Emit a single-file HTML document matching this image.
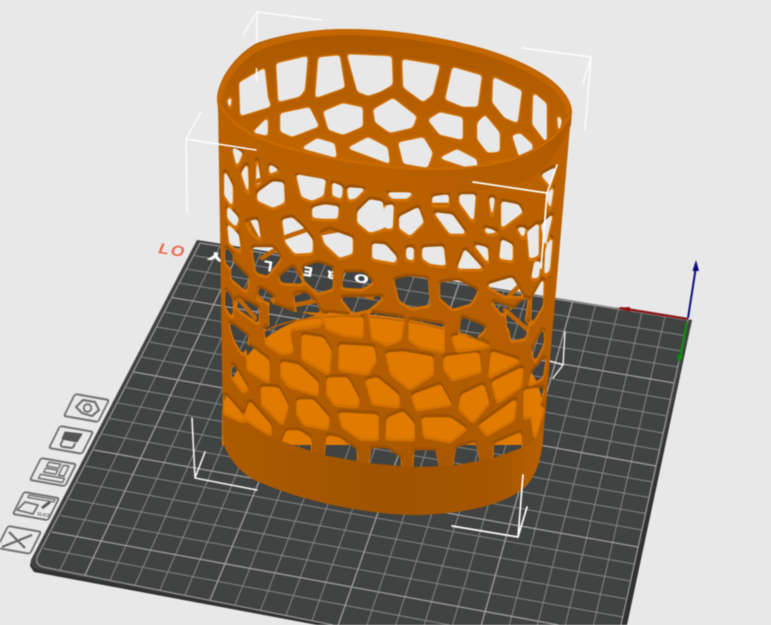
<!DOCTYPE html>
<html lang="en">
<head>
<meta charset="utf-8">
<title>Slicer preview</title>
<style>
html,body{margin:0;padding:0;background:#e8e8e8;width:771px;height:625px;overflow:hidden}
svg{display:block;filter:blur(.5px)}
text{font-family:"Liberation Sans",sans-serif}
</style>
</head>
<body>
<svg xmlns="http://www.w3.org/2000/svg" width="771" height="625" viewBox="0 0 771 625">
<defs>
<clipPath id="plateClip"><polygon points="197,240 692,320 627,625 317,625 34,572 30,566 31,560"/></clipPath>
<clipPath id="bodyClip"><path d="M218,105 L220,230 L223,440 C226,458 245,478 262,483 C300,500 360,513 410,515 C460,515 505,505 525,487 C535,478 541,460 543,440 L556,290 L571,115 Z"/></clipPath>
<linearGradient id="bodyG" x1="0" y1="0" x2="0" y2="1"><stop offset="0" stop-color="#bc6200"/><stop offset=".55" stop-color="#b75f00"/><stop offset="1" stop-color="#a55600"/></linearGradient>
<linearGradient id="baseG" x1="0" y1="0" x2="1" y2="0"><stop offset="0" stop-color="#ad5b00"/><stop offset=".5" stop-color="#a05300"/><stop offset=".85" stop-color="#a65600"/><stop offset="1" stop-color="#b66000"/></linearGradient>
<linearGradient id="wallG" gradientUnits="userSpaceOnUse" x1="0" y1="30" x2="0" y2="170"><stop offset="0" stop-color="#a95700"/><stop offset=".3" stop-color="#b15c00"/><stop offset="1" stop-color="#c26600"/></linearGradient>
<linearGradient id="bandG" x1="0" y1="0" x2="1" y2="0"><stop offset="0" stop-color="#ba6100"/><stop offset=".5" stop-color="#b96000"/><stop offset="1" stop-color="#b05b00"/></linearGradient>

<filter id="round" x="0" y="0" width="771" height="625" filterUnits="userSpaceOnUse" color-interpolation-filters="sRGB">
<feGaussianBlur stdDeviation="1.7"/>
<feComponentTransfer><feFuncA type="linear" slope="9" intercept="-4"/></feComponentTransfer>
</filter>

<g id="h" stroke-linejoin="round">
<polygon points="233,148 242,153 237,165"/>
<polygon points="242,173 247,165 248,192"/>
<polygon points="257,160 260,182 257,185"/>
<polygon points="258,193 273,182 283,183 284,202 273,207 258,200"/>
<polygon points="270,165 278,170 270,173"/>
<polygon points="297,175 325,180 323,195 312,200 302,196"/>
<polygon points="333,183 342,187 341,198 333,195"/>
<polygon points="348,188 364,189 355,198 349,199"/>
<polygon points="388,193 412,193 407,198 392,198"/>
<polygon points="433,197 448,195 448,204 433,204"/>
<polygon points="460,195 475,195 473,220 460,202"/>
<polygon points="313,208 325,205 338,207 337,218 323,218 313,217"/>
<polygon points="358,212 370,200 382,202 383,228 370,232 358,222"/>
<polygon points="386,206 393,205 392,228 386,228"/>
<polygon points="400,217 418,208 423,222 410,235 400,228"/>
<polygon points="435,213 452,215 465,233 450,233"/>
<polygon points="502,202 518,205 522,212 502,227"/>
<polygon points="485,228 497,232 487,233"/>
<polygon points="490,198 494,198 492,215"/>
<polygon points="518,228 525,228 523,237"/>
<polygon points="542,175 555,168 550,185"/>
<polygon points="542,225 552,215 545,245"/>
<polygon points="547,195 553,188 550,208"/>
<polygon points="546,250 552,238 549,270 545,274"/>
<polygon points="535,262 540,262 538,277 532,278"/>
<polygon points="528,232 538,224 538,255 530,258"/>
<polygon points="225,172 232,186 232,205 225,195"/>
<polygon points="228,207 238,218 236,226 228,218"/>
<polygon points="226,248 232,255 232,268 226,262"/>
<polygon points="226,290 232,300 232,316 226,306"/>
<polygon points="247,222 257,220 260,238 252,232"/>
<polygon points="283,220 292,218 302,227 312,240 312,252 295,253 286,242"/>
<polygon points="322,233 330,230 343,235 352,238 352,253 340,257 325,243"/>
<polygon points="373,244 385,245 396,257 395,262 373,258"/>
<polygon points="407,248 413,248 413,260 407,258"/>
<polygon points="423,248 443,247 445,265 430,263 423,258"/>
<polygon points="465,250 482,268 458,268"/>
<polygon points="475,245 487,248 488,262"/>
<polygon points="502,240 512,245 512,260 500,258"/>
<polygon points="228,225 238,235 240,250 230,243"/>
<polygon points="232,262 248,278 246,290 232,278"/>
<polygon points="253,248 273,248 280,258 267,275 257,272"/>
<polygon points="280,277 293,267 302,283 282,282"/>
<polygon points="303,268 318,263 332,268 332,288 318,292 305,280"/>
<polygon points="345,273 363,273 372,282 362,288 343,287"/>
<polygon points="342,298 357,298 382,297 368,309 353,312"/>
<polygon points="260,288 273,297 272,302 258,298"/>
<polygon points="295,295 305,293 315,302 320,312 297,310"/>
<polygon points="238,298 258,308 258,322 238,308"/>
<polygon points="270,304 295,313 320,317 320,324 285,328 270,325"/>
<polygon points="395,280 408,277 427,279 429,304 412,307 400,300"/>
<polygon points="441,283 458,281 477,291 470,303 453,308 441,298"/>
<polygon points="488,285 512,278 522,295 505,295"/>
<polygon points="507,315 527,298 523,328 508,328"/>
<polygon points="533,298 543,280 542,305 532,322"/>
<polygon points="493,302 510,308 502,313"/>
<polygon points="462,318 480,325 485,328 478,335 460,332"/>
<polygon points="265,328 288,325 292,350 282,352 267,343"/>
<polygon points="325,313 362,317 362,335 343,333 327,327"/>
<polygon points="370,313 403,318 400,338 387,343 373,337"/>
<polygon points="410,320 443,325 443,350 420,345 410,338"/>
<polygon points="453,336 477,338 488,345 457,349"/>
<polygon points="230,323 248,337 243,353 235,340"/>
<polygon points="248,345 268,360 268,380 248,368"/>
<polygon points="303,335 323,338 330,350 328,372 303,357"/>
<polygon points="340,345 373,347 375,360 367,372 340,368"/>
<polygon points="387,353 403,352 432,357 432,373 410,387 392,373"/>
<polygon points="445,357 478,353 480,370 453,378 445,368"/>
<polygon points="492,352 518,360 490,375"/>
<polygon points="282,362 298,365 317,382 317,393 290,385 282,375"/>
<polygon points="328,378 347,378 358,398 357,405 335,403 328,393"/>
<polygon points="367,380 377,378 398,395 398,405 373,402"/>
<polygon points="413,395 440,385 450,403 417,408"/>
<polygon points="462,395 483,385 488,402 473,420 460,408"/>
<polygon points="493,382 522,368 520,385 498,400"/>
<polygon points="262,387 278,388 287,405 282,422 263,403"/>
<polygon points="233,365 247,388 243,390 232,375"/>
<polygon points="298,400 313,400 328,417 327,427 305,423 298,413"/>
<polygon points="340,413 377,415 377,438 360,437 343,425"/>
<polygon points="388,418 403,412 413,423 413,438 387,437"/>
<polygon points="423,418 450,418 465,428 450,440 425,435"/>
<polygon points="480,425 515,400 513,418 487,433"/>
<polygon points="250,402 270,425 270,433 245,417"/>
<polygon points="525,390 543,388 538,407 525,417"/>
<polygon points="287,431 299,431 310,438 310,452 283,442"/>
<polygon points="328,436 339,438 356,450 356,465 325,458"/>
<polygon points="372,449 387,449 400,458 400,472 369,470"/>
<polygon points="415,451 435,451 439,472 414,472"/>
<polygon points="457,448 475,443 480,467 453,472"/>
<polygon points="495,444 520,433 521,450 494,464"/>
<polygon points="532,413 543,407 535,435"/>
<polygon points="225,395 240,412 243,420 225,412"/>
<polygon points="510,330 528,323 525,337 512,340"/>
<polygon points="533,350 543,330 543,343 535,360"/>
<polygon points="532,373 545,358 542,377 530,383"/>
</g>

<g id="u" stroke-linejoin="round">
<polygon points="240,83 264,69 267,97 270,106 241,115"/>
<polygon points="277,64 307,57 304,90 299,96 279,101"/>
<polygon points="319,58 339,56 344,87 316,97"/>
<polygon points="348,55 391,57 392,84 380,91 368,95 358,91"/>
<polygon points="403,60 439,66 432,94 423,101 404,87"/>
<polygon points="453,68 481,76 477,106 463,106 446,99"/>
<polygon points="494,78 521,91 517,122 505,117 493,102"/>
<polygon points="534,94 546,104 546,141 533,124"/>
<polygon points="558,116 561,120 559,132"/>
<polygon points="228,100 231,98 230,108"/>
<polygon points="254,132 267,119 267,135"/>
<polygon points="281,114 309,108 318,126 292,136 281,131"/>
<polygon points="324,112 343,104 362,108 362,126 343,134 329,129"/>
<polygon points="374,110 393,99 416,117 412,127 390,132 376,122"/>
<polygon points="429,120 440,113 462,118 462,139 440,134"/>
<polygon points="478,123 485,116 499,133 499,151 488,152 478,139"/>
<polygon points="513,136 520,134 532,145 531,151 520,157"/>
<polygon points="303,148 317,139 334,144 336,157"/>
<polygon points="349,148 368,138 387,148 389,163"/>
<polygon points="399,143 423,138 432,153 427,167 404,163"/>
<polygon points="441,158 457,150 476,160 477,170"/>
<polygon points="493,163 505,162 497,168"/>
</g>

<mask id="m" maskUnits="userSpaceOnUse" x="0" y="0" width="771" height="625">
<rect x="0" y="0" width="771" height="625" fill="#fff"/>
<g filter="url(#round)"><use href="#h" fill="#000" stroke="#000" stroke-width="1.6"/></g>
</mask>
</defs>

<rect x="0" y="0" width="771" height="625" fill="#e8e8e8"/>

<!-- plate -->
<polygon points="197,240 692,320 627,625 317,625 34,572 30,566 31,560" fill="#303131"/>
<polygon points="197,240 692,320 621,625 332,625 34,568 31,564 31,560" fill="#414242"/>
<g clip-path="url(#plateClip)" fill="none">
<path stroke="#858686" stroke-width="1" d="M220,246.2L60,570M261,252.6L110,580M282,255.9L135,585M304,259.4L160,590M326,262.9L185,595M370,269.8L235,605M392,273.3L260.5,610.1M414,276.8L286,615.2M436.5,280.3L312,620.4M481.5,287.4L367,625M504,291L395.7,625M527,294.6L424.2,625M549.5,298.2L452.6,625M595.5,305.4L509.4,625M618.5,309L537.4,625M642,312.7L565.3,625M665,316.4L593.5,625
M193.6,255.5L684.6,335.5M186.7,269L681.2,351M179.5,283L677.7,367M164.6,312L670.5,399.5M157,327L666.9,416M149.3,342L663.1,433M141.6,357L659.4,450M126,387.5L652.4,482M118,403L649,497.5M110,418.5L645.4,513.5M102.1,434L641.8,530M85.7,466L634.3,564M77.3,482.5L630.6,581M68.8,499L626.6,599M60.4,515.5L622.7,617M43.5,548.5L449.5,625"/>
<path stroke="#a0a0a0" stroke-width="1.3" d="M240,249.3L85,575M348,266.4L210,600M459,283.9L338.2,625M572.5,301.8L481.3,625M172.1,297.5L674.1,383M133.9,372L655.9,466M93.9,450L638.1,547M51.9,532L558.6,625"/>
<path stroke="#9a9a9a" stroke-width="1.2" d="M333,625L43,567Q35,565 37,557L200,243L688,320L621,625"/>
</g>

<!-- bed markings -->
<text transform="translate(158,253) rotate(9) scale(1.15,1)" font-size="15" font-weight="700" font-style="italic" letter-spacing="1.5" fill="#ec6a50">LO</text>
<g fill="#fff" font-weight="700" stroke="#fff" stroke-width=".6">
<text transform="translate(224,254) rotate(190) scale(1.4,.7)" font-size="17">Y</text>
<text transform="translate(273,262) rotate(190)" font-size="14">L</text>
<text transform="translate(313,268) rotate(190)" font-size="13">E</text>
<text transform="translate(336,272) rotate(190)" font-size="14">a</text>
<text transform="translate(369,276) rotate(190) scale(1.3,.8)" font-size="14">O</text>
</g>

<!-- back bounding box lines -->
<g stroke="#fff" stroke-width="1.4" fill="none" stroke-linecap="round" opacity=".95">
<path d="M322,20L257,12L243,35M257,12L256.5,82"/>
<path d="M201,112L186,139L187,213M186,139L256,150"/>
<path d="M523,48L591,57L583,83M591,57L585,130"/>
<path d="M257,288L258,303"/>
<path d="M565,332L563,365L547,360M563,365L553,378"/>
<path d="M192,418L195,478L257,490M195,478L205,452" stroke-width="1.6"/>
</g>

<!-- axes -->
<path d="M688,319L620,308" stroke="#8a1414" stroke-width="2.4" fill="none"/>
<polygon points="616,308 630,307 630,312" fill="#8a1414"/>
<path d="M688,318L695.5,270" stroke="#0b0b7e" stroke-width="2" fill="none"/>
<polygon points="696,260 692.5,271 699,271" fill="#0b0b7e"/>
<path d="M687,322L680,358" stroke="#109010" stroke-width="2.2" fill="none"/>
<polygon points="679,363 676.5,355 683,356" fill="#109010"/>

<!-- back wall struts seen through the mesh -->
<g fill="none" stroke="#bf6400" stroke-linecap="round" stroke-linejoin="round" stroke-width="4.5">
<path d="M283,238L312,228"/>
<path d="M322,233L344,229"/>
<path d="M255,182L283,172"/>
<path d="M432,205L450,205"/>
<path d="M272,300L300,292"/>
<path d="M470,250L487,270"/>
<path d="M477,312L493,333"/>
<path d="M505,310L528,330"/>
<path d="M245,215L258,240"/>
<path d="M262,258L275,250"/>
<path d="M505,300L520,285"/>
<path d="M357,292L372,298"/>
<path d="M240,300L255,318"/>
<path d="M295,305L320,300"/>
<path d="M265,305L252,290"/>
</g>

<!-- floor -->
<path d="M222,410C232,362 265,322 330,313C400,312 480,330 525,365C540,380 546,400 542,445L222,445Z" fill="#e07a00"/>
<path d="M250,340C275,322 300,318 340,316C400,316 470,330 515,358" fill="none" stroke="#b86000" stroke-width="1.5"/>

<!-- front mesh wall -->
<g mask="url(#m)">
<g clip-path="url(#bodyClip)">
<rect x="210" y="100" width="370" height="420" fill="url(#bodyG)"/>
<g filter="url(#round)"><use href="#h" transform="translate(0,-1.5)" fill="#9b5000" stroke="#9b5000" stroke-width="4.5"/></g>
<g filter="url(#round)"><use href="#h" transform="translate(0,1.6)" fill="#d27100" stroke="#d27100" stroke-width="4"/></g>
</g>
</g>

<!-- solid base -->
<path d="M223,420L243,425L278,440L323,455L367,463L410,467L450,466L490,459L530,445L543,428L543,440C541,460 535,478 525,487C505,505 460,515 410,515C360,513 300,500 262,483C245,478 226,458 223,440Z" fill="url(#baseG)"/>

<!-- back wall upper with rim interior -->
<path d="M217,100C217,80 235,55 257,43C285,33 320,29 345,29C390,29 430,35 470,45C510,55 545,72 560,88C568,97 572,105 572,112C562,130 545,145 520,155C500,163 470,168 433,168C420,168 400,168 367,163C330,158 280,148 250,133C235,125 222,112 217,100Z" fill="url(#wallG)"/>
<g filter="url(#round)"><use href="#u" fill="#cc6c00" stroke="#cc6c00" stroke-width="4.5"/></g>
<g filter="url(#round)"><use href="#u" fill="#e8e8e8" stroke="#e8e8e8" stroke-width="1.6"/></g>
<path d="M256.5,68L256.5,82" stroke="#fff" stroke-width="1.4"/>
<path d="M220,100C220,82 238,58 259,47C287,36 320,32 345,32C390,32 430,38 470,48C510,58 543,74 558,90C566,99 569,106 569,114" fill="none" stroke="#c46700" stroke-width="6"/>

<!-- rim front band -->
<path d="M217,100C222,112 235,125 250,133C280,148 330,158 367,163C400,168 420,168 433,168C470,168 500,163 520,155C545,145 562,130 572,110L571,125C560,150 545,170 527,180C500,190 470,193 433,193C400,193 380,190 367,187C330,180 300,175 280,167C250,155 225,135 219,118Z" fill="url(#bandG)"/>
<path d="M218,101C223,113 236,126 251,134C281,149 331,159 368,164C401,169 421,169 433,169C470,169 501,164 521,156C546,146 563,131 571,113" fill="none" stroke="#cb6c00" stroke-width="2"/>

<!-- front bounding box lines -->
<g stroke="#fff" stroke-width="1.7" fill="none" stroke-linecap="round">
<path d="M186,139L256,150" stroke-width="1.5"/>
<path d="M473,182L547,193L557,165M547,193L541,268"/>
<path d="M452,526L518,537L523,475M518,537L527,507"/>
</g>

<!-- left toolbar icons -->
<g fill="none" stroke="#727272" stroke-width="1.9" stroke-linejoin="round">
<rect transform="matrix(1 .176 -.5 1 75 394)" x="0" y="0" width="34" height="22" rx="2"/>
<polygon points="76,407 83,400 95,402 99,410 92,416 82,413" stroke-width="2.2"/>
<circle cx="87.5" cy="408" r="3.8" stroke-width="1.9"/>

<rect transform="matrix(1 .176 -.5 1 60 426)" x="0" y="0" width="33" height="22" rx="2"/>
<polygon points="65,432 82,434 77,442 62,439" fill="#555" stroke="#555" stroke-width="1"/>
<path d="M63,440Q58,447 64,447L72,448Q74,447 75,443" stroke="#666"/>

<rect transform="matrix(1 .176 -.5 1 41 458)" x="0" y="0" width="35" height="22" rx="2"/>
<g transform="matrix(1 .176 -.5 1 41 458)" stroke-width="1.5">
<rect x="9" y="2.5" width="12" height="4"/>
<rect x="9" y="8.5" width="12" height="4"/>
<rect x="24" y="3" width="5.5" height="10"/>
<rect x="7" y="15" width="24" height="4"/>
</g>

<rect transform="matrix(1 .176 -.5 1 24 492)" x="0" y="0" width="35" height="22" rx="2"/>
<rect transform="matrix(1 .176 -.5 1 24 492)" x="6" y="2" width="26" height="2.4" stroke-width="1.3"/>
<polygon points="25,502 38,505 33,514 17,510"/>
<path d="M42,508L50,502" stroke="#555" stroke-width="2.8"/>

<rect transform="matrix(1 .176 -.5 1 8 526)" x="0" y="0" width="33" height="22" rx="2"/>
<path d="M9,532L25,548M32,535L2,547" stroke="#666" stroke-width="2.2"/>
</g>
<text transform="translate(37,515) rotate(10)" font-size="4.5" font-weight="700" fill="#666">SLICE</text>
</svg>
</body>
</html>
